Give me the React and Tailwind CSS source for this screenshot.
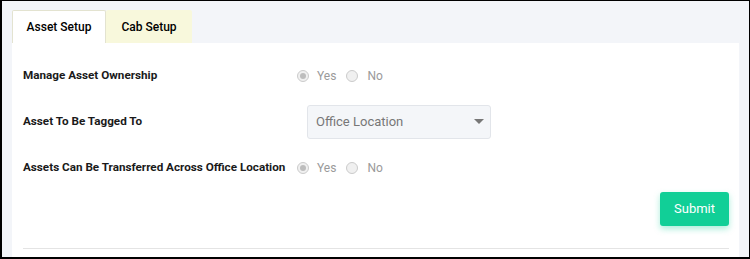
import React from "react";

const Radio = ({ checked }) => (
  <span className="w-[12px] h-[12px] rounded-full border border-[#cbcbcb] bg-[#f0f0f0] flex items-center justify-center">
    {checked && <span className="w-[6px] h-[6px] rounded-full bg-[#bdbdbd]" />}
  </span>
);

const YesNo = () => (
  <div className="flex items-center text-[12px] text-[#9a9a9a]">
    <Radio checked />
    <span className="ml-[8px]">Yes</span>
    <span className="ml-[10px]"><Radio /></span>
    <span className="ml-[9px]">No</span>
  </div>
);

export default function App() {
  return (
    <div
      className="w-[750px] h-[259px] bg-[#f3f5f9] border-black border-t border-r border-l-2 border-b-2 overflow-hidden"
      style={{ fontFamily: "Roboto, 'Liberation Sans', sans-serif" }}
    >
      <div className="pl-[10px] pr-[10px] pt-[9px]">
        {/* tabs */}
        <div className="flex h-[33px] text-[12px] font-medium text-black">
          <div className="w-[94px] bg-white border border-b-0 border-[#e3e3d0] rounded-t-[2px] flex items-center justify-center">
            Asset Setup
          </div>
          <div className="w-[86px] bg-[#f8f8dc] rounded-t-[2px] flex items-center justify-center">
            Cab Setup
          </div>
        </div>

        {/* panel */}
        <div className="bg-white h-[220px] pl-[11px] pr-[10px]">
          <div className="flex items-center h-[50px] pt-[16px]">
            <div className="w-[274px] text-[11.7px] font-bold text-[#1a1a1a]">Manage Asset Ownership</div>
            <YesNo />
          </div>

          <div className="flex items-center h-[45px] mt-[6px]">
            <div className="w-[284px] text-[11.7px] font-bold text-[#1a1a1a]">Asset To Be Tagged To</div>
            <div className="w-[184px] h-[34px] bg-[#f4f6f9] border border-[#e2e5ea] rounded-[3px] flex items-center justify-between pl-[8px] pr-[6px] text-[13px] text-[#777]">
              <span>Office Location</span>
              <span className="w-0 h-0 border-l-[5px] border-r-[5px] border-t-[5px] border-l-transparent border-r-transparent border-t-[#777]" />
            </div>
          </div>

          <div className="flex items-center h-[40px] mt-[4px]">
            <div className="w-[274px] text-[11.7px] font-bold text-[#1a1a1a] whitespace-nowrap">Assets Can Be Transferred Across Office Location</div>
            <YesNo />
          </div>

          <div className="flex justify-end mt-[4px]">
            <button className="w-[69px] h-[34px] bg-[#11cf97] text-white text-[13px] rounded-[3px] shadow-[0_3px_6px_rgba(17,207,151,0.35)]">
              Submit
            </button>
          </div>

          <div className="mt-[22px] border-t border-[#e4e4e4]" />
        </div>
      </div>
    </div>
  );
}
